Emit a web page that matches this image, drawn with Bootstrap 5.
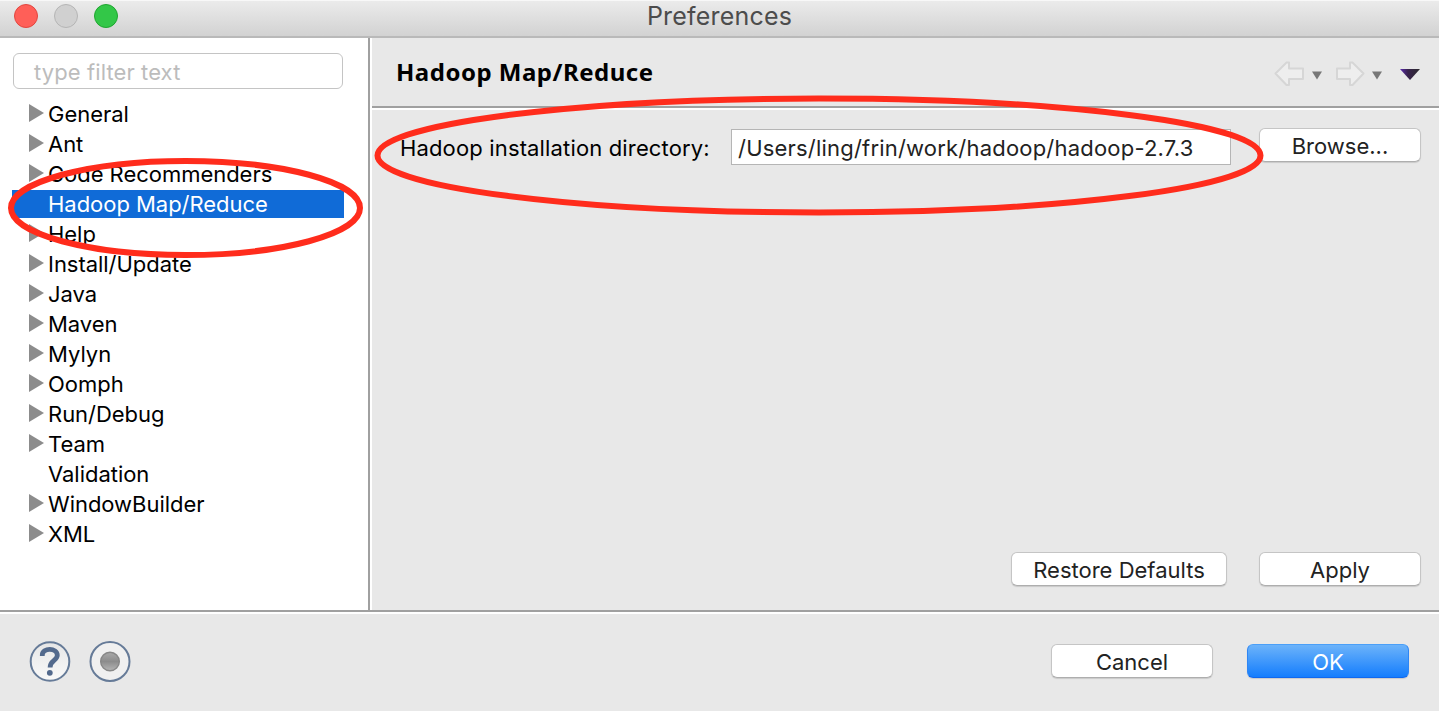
<!DOCTYPE html>
<html lang="en">
<head>
<meta charset="utf-8">
<title>Preferences</title>
<link href="https://cdn.jsdelivr.net/npm/bootstrap@5.3.0/dist/css/bootstrap.min.css" rel="stylesheet">
<style>
html,body{height:100%;overflow:hidden}
body{font:22px/30px Inter,"Liberation Sans",sans-serif;color:#000;background:#e8e8e8}
.window{height:711px}
.titlebar{height:38px;background:linear-gradient(#ebebeb,#d2d2d2);border-top:1px solid #f8f8f8;border-bottom:2px solid #b9b9b9;padding-left:14px;gap:16px}
.light{width:24px;height:24px;border-radius:50%;border:1px solid;margin-top:-5px}
.light.red{background:#ff5f58;border-color:#e2463f}
.light.gray{background:#d0d0d0;border-color:#b5b5b5}
.light.green{background:#33c748;border-color:#1fa630}
.title{left:0;right:0;top:0;font-size:25px;color:#4c4c4c;letter-spacing:.2px}
.sidebar{width:372px;background:#fff;border-right:2px solid #fff;box-shadow:inset -2px 0 #a0a0a0;padding:15px 0 0 12px}
.filter{width:330px;height:36px;margin-left:1px;border:1px solid #c4c4c4;border-radius:6px;padding:2px 20px;color:#bcbcbc;line-height:32px;letter-spacing:.1px}
.tree{margin-top:10px;width:332px;letter-spacing:-.03px}
.tree li{height:30px;padding-left:17px;gap:4px;line-height:30px}
.tree svg{width:15px;height:18px;fill:#8c8c8c;flex:none;margin-top:-3px}
.tree li.chosen{background:linear-gradient(#106bd7,#106bd7) 0 1px/100% 28px no-repeat;color:#fff}
.page-head{height:72px;border-bottom:2px solid #fff;box-shadow:inset 0 -2px #a0a0a0;padding:0 18px 0 24px}
.page-head h1{font:700 24px/34px "Noto Sans",sans-serif;margin:-2px 0 0;letter-spacing:.5px}
.form-row{padding:18px 18px 0 28px}
.inst{width:311px;line-height:40px;letter-spacing:.15px}
.path-box{width:500px;height:36px;background:#fff;border:1px solid #b5b5b5;padding-left:6px;line-height:36px;margin:1px 0 0 20px;color:#222;letter-spacing:.2px}
.mac{height:34px;width:162px;padding:0;border:1px solid #c5c5c5;border-bottom-color:#aeaeae;border-radius:6px;background:#fff;color:#222;font-size:22px;line-height:34px;box-shadow:0 1px 1px #0002;white-space:nowrap}
.mac.wide{width:216px}
.mac.ok{background:linear-gradient(#6cb3fa,#147dfd);border-color:#4a9ff8 #2f86f4 #0f68ef;color:#fff}
.restore-row{gap:32px;padding:0 18px 24px 0}
.bottom{height:101px;border-top:2px solid #a0a0a0;box-shadow:inset 0 2px #fff;padding:0 30px 2px 28px}
.pair{gap:34px}
.marks{left:0;top:0;pointer-events:none}
</style>
</head>
<body>
<div class="window d-flex flex-column position-relative">
<header class="titlebar d-flex align-items-center position-relative flex-shrink-0">
<span class="light red"></span><span class="light gray"></span><span class="light green"></span>
<div class="title position-absolute text-center">Preferences</div>
</header>
<main class="d-flex flex-grow-1">
<aside class="sidebar flex-shrink-0">
<div class="filter">type filter text</div>
<ul class="tree list-unstyled mb-0" id="tree"></ul>
</aside>
<section class="d-flex flex-column flex-grow-1">
<div class="page-head d-flex justify-content-between align-items-center">
<h1>Hadoop Map/Reduce</h1>
<svg width="148" height="30" viewBox="1273 58 148 30"><g fill="#eee" stroke="#d6d6d6" stroke-width="2" stroke-linejoin="round"><path d="M1275.500 73.500l11-11h2.500v6h14v10.500h-14v6h-2.500z"/><path d="M1363.500 73.500l-11-11h-2.500v6h-13v10.500h13v6h2.500z"/></g><path fill="#777" d="M1312 71.500h10l-5 8zM1372 71.500h10l-5 8z"/><linearGradient id="v"><stop stop-color="#5b2bb0"/><stop offset=".4" stop-color="#38234c"/><stop offset="1" stop-color="#2c2a2e"/></linearGradient><path fill="url(#v)" d="M1400 69h20l-10 11z"/></svg>
</div>
<div class="form-row d-flex">
<label class="inst">Hadoop installation directory:</label>
<div class="path-box">/Users/ling/frin/work/hadoop/hadoop-2.7.3</div>
<button class="btn mac ms-auto">Browse...</button>
</div>
<div class="restore-row d-flex justify-content-end mt-auto"><button class="btn mac wide">Restore Defaults</button><button class="btn mac">Apply</button></div>
</section>
</main>
<footer class="bottom d-flex align-items-center justify-content-between flex-shrink-0">
<svg width="104" height="44" viewBox="28 639.500 104 44"><defs><linearGradient id="g" x2="0" y2="1"><stop stop-color="#e6e6e6"/><stop offset="1" stop-color="#fafafa"/></linearGradient><linearGradient id="b" x2="0" y2="1"><stop stop-color="#aaa"/><stop offset=".5" stop-color="#8c8c8c"/><stop offset="1" stop-color="#b5b5b5"/></linearGradient></defs><g stroke="#667b98" stroke-width="2"><circle cx="50" cy="662" r="19.300" fill="url(#g)"/><circle cx="110" cy="662" r="19.500" fill="#f0f0f0"/></g><path d="M42.300 656.500v-1c0-7.500 15-7.500 15 .3 0 5.500-7.200 5-7.200 12.200" fill="none" stroke="#536a8d" stroke-width="4.800"/><circle cx="49.800" cy="673.300" r="2.900" fill="#536a8d"/><circle cx="110" cy="662" r="9.300" fill="url(#b)" stroke="#888" stroke-width="1.500"/></svg>
<div class="pair d-flex"><button class="btn mac">Cancel</button><button class="btn mac ok">OK</button></div>
</footer>
<svg class="marks position-absolute" width="1439" height="711" fill="none" stroke="#ff2c1c" stroke-width="6"><ellipse cx="185.500" cy="208" rx="174.500" ry="47"/><ellipse cx="819" cy="155.500" rx="441.500" ry="57"/></svg>
</div>
<script>
const items=["General","Ant","Code Recommenders","Hadoop Map/Reduce","Help","Install/Update","Java","Maven","Mylyn","Oomph","Run/Debug","Team","Validation","WindowBuilder","XML"];
const leaves=["Hadoop Map/Reduce","Validation"];
document.getElementById("tree").innerHTML=items.map((t,i)=>`<li class="d-flex align-items-center ${i===3?"chosen":""}"><svg viewBox="0 0 15 18">${leaves.includes(t)?"":'<path d="M0 0l15 9-15 9z"/>'}</svg><span>${t}</span></li>`).join("");
</script>
<script src="https://cdn.jsdelivr.net/npm/bootstrap@5.3.0/dist/js/bootstrap.bundle.min.js"></script>
</body>
</html>
